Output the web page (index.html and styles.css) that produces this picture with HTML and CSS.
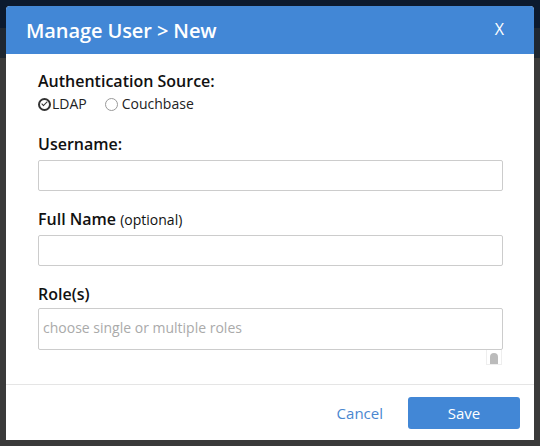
FILE: index.html
```html
<!DOCTYPE html>
<html>
<head>
<meta charset="utf-8">
<link rel="stylesheet" href="styles.css">
</head>
<body>
<div class="backdrop">
  <div class="topbar"></div>
  <div class="subbar"></div>
</div>
<div class="dialog">
  <div class="dialog-header">
    <h2 class="dialog-title">Manage User &gt; New</h2>
    <span class="close">X</span>
  </div>
  <div class="dialog-body">
    <div class="field">
      <div class="label">Authentication Source:</div>
      <div class="radios">
        <label class="radio"><span class="radio-dot checked"></span>LDAP</label>
        <label class="radio"><span class="radio-dot"></span>Couchbase</label>
      </div>
    </div>
    <div class="field">
      <div class="label">Username:</div>
      <div class="input"></div>
    </div>
    <div class="field">
      <div class="label">Full Name <span class="small">(optional)</span></div>
      <div class="input"></div>
    </div>
    <div class="field">
      <div class="label">Role(s)</div>
      <div class="textarea">choose single or multiple roles</div>
      <div class="grip-row"><span class="grip"><span class="thumb"></span></span></div>
    </div>
  </div>
  <div class="dialog-footer">
    <span class="cancel">Cancel</span>
    <span class="save">Save</span>
  </div>
</div>
</body>
</html>
```
FILE: styles.css
```css
html, body {
  margin: 0;
  padding: 0;
}
body {
  width: 540px;
  height: 446px;
  background: #3a3a3a;
  font-family: "Open Sans", "Noto Sans", sans-serif;
  position: relative;
  overflow: hidden;
}
.backdrop .topbar {
  height: 28px;
  background: #0c1a2e;
}
.backdrop .subbar {
  height: 30px;
  background: #1f2731;
}
.dialog {
  position: absolute;
  left: 6px;
  top: 6px;
  width: 528px;
  height: 434px;
  background: #fff;
  border-radius: 4px 4px 0 0;
  display: flex;
  flex-direction: column;
}
.dialog-header {
  height: 48px;
  flex: none;
  background: #4287d6;
  border-radius: 4px 4px 0 0;
  display: flex;
  align-items: center;
  justify-content: space-between;
  padding: 0 30px 0 20px;
  color: #fff;
}
.dialog-title {
  margin: 0;
  font-size: 20px;
  font-weight: 600;
  letter-spacing: -0.1px;
}
.close {
  font-size: 16px;
  font-weight: 400;
  margin-top: -2px;
}
.dialog-body {
  padding: 16px 31px 0 32px;
  flex: 1;
  min-height: 0;
}
.field {
  margin-bottom: 17px;
}
.field:first-child {
  margin-bottom: 19px;
}
.label {
  font-size: 16px;
  font-weight: 600;
  color: #111;
  line-height: 22px;
}
.small {
  font-size: 14px;
  font-weight: 400;
  line-height: 1;
}
.radios {
  display: flex;
  gap: 18px;
  font-size: 14px;
  color: #222;
  line-height: 20px;
  margin-top: 2px;
}
.radio {
  display: flex;
  align-items: center;
}
.radio-dot {
  width: 13px;
  height: 13px;
  border: 1px solid #999;
  border-radius: 50%;
  margin-right: 4px;
  box-sizing: border-box;
  position: relative;
}
.radio-dot.checked {
  border: 2px solid #333;
  margin-right: 1px;
}
.radio-dot.checked::after {
  content: "";
  position: absolute;
  left: 3px;
  top: 0px;
  width: 2px;
  height: 5px;
  border: solid #333;
  border-width: 0 1.5px 1.5px 0;
  transform: rotate(45deg);
}
.input {
  height: 29px;
  border: 1px solid #ccc;
  border-radius: 2px;
  margin-top: 5px;
}
.textarea {
  border: 1px solid #ccc;
  border-radius: 2px;
  margin-top: 3px;
  box-sizing: border-box;
  font-size: 14px;
  color: #aaa;
  padding: 8px 4px;
  line-height: 22px;
  height: 42px;
}
.grip-row {
  display: flex;
  justify-content: flex-end;
}
.grip {
  width: 14px;
  height: 14px;
  border: 1px solid #eee;
  border-top: none;
  display: flex;
  justify-content: center;
  align-items: flex-end;
  margin-right: 1px;
}
.thumb {
  width: 8px;
  height: 11px;
  background: #bbb;
  border-radius: 4px 4px 0 0;
}
.dialog-footer {
  flex: none;
  border-top: 1px solid #e5e5e5;
  height: 55px;
  display: flex;
  align-items: center;
  justify-content: flex-end;
  padding: 0 14px 0 0;
  gap: 25px;
}
.cancel {
  color: #4a87d0;
  font-size: 15px;
}
.save {
  width: 112px;
  height: 32px;
  background: #4287d6;
  color: #fff;
  font-size: 15px;
  border-radius: 3px;
  display: flex;
  align-items: center;
  justify-content: center;
}
```
